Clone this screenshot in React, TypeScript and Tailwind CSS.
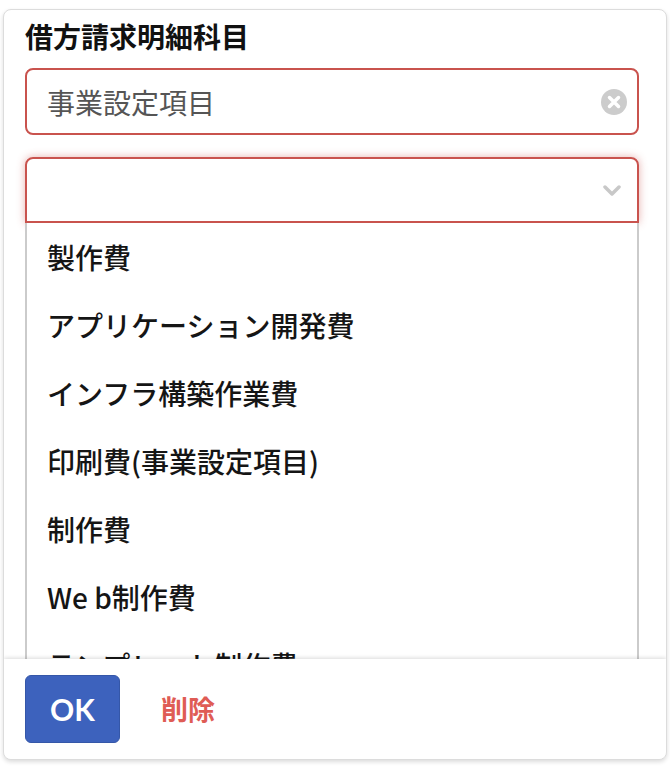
import * as React from "react";

const items = [
  "製作費",
  "アプリケーション開発費",
  "インフラ構築作業費",
  "印刷費(事業設定項目)",
  "制作費",
  "We b制作費",
  "テンプレート制作費",
  "デザイン費",
];

const App: React.FC = () => {
  return (
    <div className="w-[670px] h-[772px] bg-white pt-[9px] pl-[3px] font-['Noto_Sans_CJK_JP','Noto_Sans',sans-serif]">
      <div className="w-[664px] h-[751px] flex flex-col border border-[#dcdcdc] rounded-[8px] shadow-[0_2px_4px_rgba(0,0,0,0.14)] overflow-hidden bg-white">
        {/* form area */}
        <div className="flex-1 overflow-hidden pl-[21px] pr-[27px] pt-[9px]">
          <div className="text-[28px] leading-[34px] font-bold text-[#111]">借方請求明細科目</div>

          {/* text input */}
          <div className="mt-[15px] h-[67px] flex items-center justify-between border-2 border-[#c9534e] rounded-[8px] pl-[20px] pr-[10px]">
            <span className="text-[28px] leading-[36px] text-[#555]">事業設定項目</span>
            <svg width="26" height="26" viewBox="0 0 26 26">
              <circle cx="13" cy="13" r="13" fill="#cccccc" />
              <path d="M8.5 8.5l9 9M17.5 8.5l-9 9" stroke="#fff" strokeWidth="3.5" strokeLinecap="round" />
            </svg>
          </div>

          {/* select */}
          <div className="mt-[22px] h-[66px] flex items-center justify-end border-2 border-[#c9534e] rounded-t-[8px] shadow-[0_0_8px_rgba(201,83,78,0.45)] pr-[16px]">
            <svg width="18" height="11" viewBox="0 0 18 11">
              <path d="M2 2l7 7 7-7" fill="none" stroke="#c8c8c8" strokeWidth="3.5" strokeLinecap="round" strokeLinejoin="round" />
            </svg>
          </div>

          {/* dropdown list */}
          <div className="border-x-2 border-[#cbcbcb] bg-white">
            {items.map((item) => (
              <div key={item} className="h-[68px] flex items-center px-[20px] text-[28px] leading-[36px] font-medium text-[#151515] whitespace-nowrap">
                {item}
              </div>
            ))}
          </div>
        </div>

        {/* footer */}
        <div className="h-[100px] shrink-0 flex items-center gap-[41px] px-[21px] bg-white shadow-[0_-1px_4px_rgba(0,0,0,0.15)] relative">
          <button className="w-[95px] h-[68px] flex items-center justify-center rounded-[6px] bg-[#3d62bd] border border-[#3557a8] text-white text-[30px] leading-[36px] font-bold font-['Lato',sans-serif]">
            OK
          </button>
          <span className="text-[27px] leading-[36px] font-bold text-[#df5c55]">削除</span>
        </div>
      </div>
    </div>
  );
};

export default App;
